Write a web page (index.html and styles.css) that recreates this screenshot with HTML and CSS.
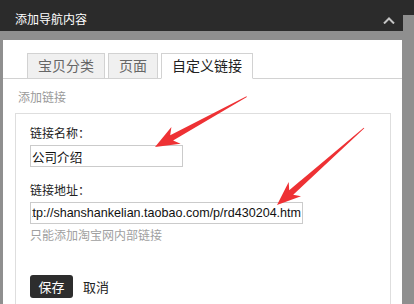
FILE: index.html
```html
<!DOCTYPE html>
<html lang="zh-CN">
 <head>
   <meta charset="UTF-8">
   <title>添加导航内容</title>
   <link rel="stylesheet" href="styles.css">
 </head>
 <body>
	<div class="window">
		<div class="head">
			<span class="title">添加导航内容</span>
			<svg class="fold" width="12" height="7" viewBox="0 0 12 7"><polyline points="1,6.5 6,1.5 11,6.5" fill="none" stroke="#c4c4c4" stroke-width="2"/></svg>
		</div>
		<div class="panel">
			<ul class="tabs">
				<li>宝贝分类</li>
				<li>页面</li>
				<li class="on">自定义链接</li>
			</ul>
			<p class="sub">添加链接</p>
			<div class="box">
				<label>链接名称：</label>
				<input class="txt short" value="公司介绍">
				<label class="second">链接地址：</label>
				<input id="addr" class="txt long" value="http://shanshankelian.taobao.com/p/rd430204.htm">
				<p class="hint">只能添加淘宝网内部链接</p>
				<div class="btns">
					<button class="save">保存</button>
					<button class="cancel">取消</button>
				</div>
			</div>
		</div>
	</div>

	<!-- 截图上的两个红箭头 -->
	<svg class="arrows" width="414" height="304" viewBox="0 0 414 304">
		<polygon points="246.5,96.2 170.2,135.2 171.4,127.1 155,147 180.6,143.7 173.1,140.4 246.9,96.9" fill="#ee3134"/>
		<polygon points="363.7,127.7 289.2,190.2 288.7,182 277,205 301.3,196.2 293.2,194.7 364.3,128.3" fill="#ee3134"/>
	</svg>

	<script type="text/javascript">
		//地址太长，滚到末尾显示
		var addrDom = document.querySelector("input#addr");
		addrDom.scrollLeft = addrDom.scrollWidth;
	</script>
 </body>
</html>
```

FILE: styles.css
```css
body{
	margin:0;
	width:414px;
	height:304px;
	overflow:hidden;
	position:relative;
	background:linear-gradient(#2b2b2b 15px, #8f8f8f 15px);
	font-family:"Liberation Sans","Noto Sans CJK SC",sans-serif;
	font-size:12px;
	color:#222;
}
.window{
	width:403px;
}
/* 顶部黑色标题栏 */
.head{
	height:31px;
	box-sizing:border-box;
	padding:9px 8px 0 15px;
	background:#2b2b2b;
	display:flex;
	align-items:center;
	justify-content:space-between;
}
.head .title{
	color:#fff;
	font-size:12px;
	line-height:16px;
}
.panel{
	margin:9px 0 0 3px;
	width:399px;
	height:264px;
	padding-top:13px;
	box-sizing:border-box;
	background:#fff;
}
/* 选项卡 */
.tabs{
	margin:0;
	padding:0 0 0 24px;
	list-style:none;
	display:flex;
	height:25px;
	border-bottom:1px solid #d2d2d2;
}
.tabs li{
	height:26px;
	box-sizing:border-box;
	padding:0 10px;
	margin-right:3px;
	line-height:24px;
	font-size:14px;
	color:#666;
	background:#f0f0f0;
	border:1px solid #d2d2d2;
}
.tabs li.on{
	color:#222;
	background:#fff;
	border-bottom-color:#fff;
}
.sub{
	margin:11px 0 0 15px;
	line-height:16px;
	color:#9a9a9a;
}
.box{
	margin:7px 11px 0 12px;
	height:178px;
	padding:12px 0 0 14px;
	border:1px solid #dedede;
	border-bottom:none;
}
.box label{
	display:block;
	line-height:16px;
	margin-bottom:3px;
}
.box label.second{
	margin-top:16px;
}
input.txt{
	display:block;
	height:22px;
	box-sizing:border-box;
	padding:0 1px;
	border:1px solid #cbcbcb;
	outline:none;
	font-family:"Liberation Sans","Noto Sans CJK SC",sans-serif;
	font-size:12.55px;
	color:#111;
}
input.short{
	width:153px;
}
input.long{
	width:273px;
}
.hint{
	margin:4px 0 0 0;
	line-height:16px;
	color:#a0a0a0;
}
.btns{
	margin-top:31px;
	display:flex;
}
.btns button{
	font-family:"Liberation Sans","Noto Sans CJK SC",sans-serif;
	font-size:13px;
	height:23px;
	border:none;
	padding:0 10px;
	background:none;
	color:#222;
}
.btns button.save{
	width:43px;
	padding:0;
	border-radius:3px;
	background:#2d2d2d;
	color:#fff;
}
.arrows{
	position:absolute;
	left:0;
	top:0;
	pointer-events:none;
}
```
